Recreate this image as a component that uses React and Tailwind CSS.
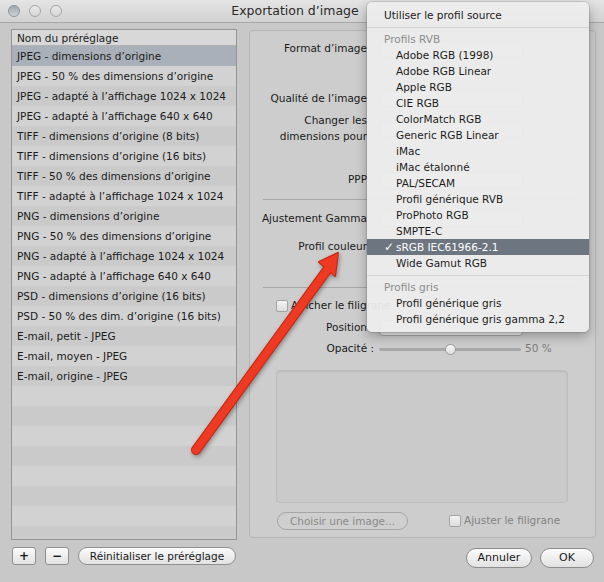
import clsx from "clsx"

const presets = [
    "JPEG - dimensions d’origine",
    "JPEG - 50 % des dimensions d’origine",
    "JPEG - adapté à l’affichage 1024 x 1024",
    "JPEG - adapté à l’affichage 640 x 640",
    "TIFF - dimensions d’origine (8 bits)",
    "TIFF - dimensions d’origine (16 bits)",
    "TIFF - 50 % des dimensions d’origine",
    "TIFF - adapté à l’affichage 1024 x 1024",
    "PNG - dimensions d’origine",
    "PNG - 50 % des dimensions d’origine",
    "PNG - adapté à l’affichage 1024 x 1024",
    "PNG - adapté à l’affichage 640 x 640",
    "PSD - dimensions d’origine (16 bits)",
    "PSD - 50 % des dim. d’origine (16 bits)",
    "E-mail, petit - JPEG",
    "E-mail, moyen - JPEG",
    "E-mail, origine - JPEG",
]

const rgbProfiles = [
    "Adobe RGB (1998)",
    "Adobe RGB Linear",
    "Apple RGB",
    "CIE RGB",
    "ColorMatch RGB",
    "Generic RGB Linear",
    "iMac",
    "iMac étalonné",
    "PAL/SECAM",
    "Profil générique RVB",
    "ProPhoto RGB",
    "SMPTE-C",
    "sRGB IEC61966-2.1",
    "Wide Gamut RGB",
]

const grayProfiles = ["Profil générique gris", "Profil générique gris gamma 2,2"]

function Row({ label, className, children }) {
    return (
        <div className={clsx("flex items-center", className)}>
            <div className="w-[117px] shrink-0 text-right">{label}</div>
            <div className="ml-[12px]">{children}</div>
        </div>
    )
}

function Popup() {
    return <div className="h-[16px] w-[144px] rounded-[4px] border border-[#a5a5a5] bg-[#ececec]" />
}

function Checkbox() {
    return <span className="inline-block h-[12px] w-[12px] rounded-[2px] border border-[#a3a3a3] bg-gradient-to-b from-[#f4f4f4] to-[#dcdcdc]" />
}

function MenuItem({ children, checked }) {
    return (
        <div
            className={clsx(
                "flex h-[16px] items-center leading-[16px]",
                checked ? "bg-[#6d7580] text-white" : "text-[#1c1c1c]"
            )}
        >
            <span className="w-[29px] pl-[17px] text-[12px] leading-none">{checked ? "✓" : ""}</span>
            <span>{children}</span>
        </div>
    )
}

export default function App() {
    const rows = Array.from({ length: 25 }, (_, i) => presets[i] ?? "")

    return (
        <div className="relative h-[582px] w-[604px] overflow-hidden bg-[#c8c8c8] font-['DejaVu_Sans',sans-serif] text-[10.5px] text-[#1a1a1a]">
            {/* Title bar */}
            <div className="flex h-[23px] items-center border-b border-[#a8a8a8] bg-gradient-to-b from-[#e4e4e4] to-[#d2d2d2]">
                <div className="flex w-[70px] gap-[9px] pl-[8px]">
                    <span className="h-[12px] w-[12px] rounded-full border border-[#8c939b] bg-gradient-to-b from-[#9ea6af] to-[#cfd4d9]" />
                    <span className="h-[12px] w-[12px] rounded-full border border-[#a6a6a6] bg-gradient-to-b from-[#e9e9e9] to-[#d6d6d6]" />
                    <span className="h-[12px] w-[12px] rounded-full border border-[#a6a6a6] bg-gradient-to-b from-[#e9e9e9] to-[#d6d6d6]" />
                </div>
                <div className="flex-1 text-center text-[12.5px] text-[#2a2a2a]">Exportation d’image</div>
                <div className="w-[84px]" />
            </div>

            <div className="flex gap-[12px] pl-[11px] pt-[6px]">
                {/* Presets column */}
                <div className="flex flex-col">
                    <div className="h-[511px] w-[226px] overflow-hidden border border-[#959595] bg-[#cbcbcb]">
                        <div className="h-[16px] border-b border-[#b2b2b2] bg-[#d8d8d8] pl-[5px] leading-[16px]">
                            Nom du préréglage
                        </div>
                        {rows.map((name, i) => (
                            <div
                                key={i}
                                className={clsx(
                                    "h-[20px] whitespace-nowrap pl-[5px] leading-[20px]",
                                    i === 0 ? "bg-[#a9b0b9]" : i % 2 ? "bg-[#d2d2d2]" : "bg-[#cacaca]"
                                )}
                            >
                                {name}
                            </div>
                        ))}
                    </div>
                    <div className="mt-[7px] flex items-center gap-[9px] pl-[1px]">
                        <button className="flex h-[18px] w-[24px] items-center justify-center rounded-[3px] border border-[#8f8f8f] bg-gradient-to-b from-[#fbfbfb] to-[#e2e2e2] text-[12px] font-bold leading-none">
                            +
                        </button>
                        <button className="flex h-[18px] w-[24px] items-center justify-center rounded-[3px] border border-[#8f8f8f] bg-gradient-to-b from-[#fbfbfb] to-[#e2e2e2] text-[12px] font-bold leading-none">
                            −
                        </button>
                        <button className="h-[18px] w-[158px] rounded-full border border-[#8f8f8f] bg-gradient-to-b from-[#fbfbfb] to-[#e2e2e2] leading-[16px]">
                            Réinitialiser le préréglage
                        </button>
                    </div>
                </div>

                {/* Settings column */}
                <div className="flex flex-col">
                    <div className="mt-[1px] h-[508px] w-[347px] rounded-[4px] border border-[#b5b5b5] bg-[#cdcdcd]">
                        <Row label="Format d’image" className="mt-[9px] h-[18px]">
                            <Popup />
                        </Row>
                        <Row label="Qualité de l’image" className="mt-[32px] h-[18px]">
                            <Popup />
                        </Row>
                        <Row label={<span className="leading-[15px]">Changer les<br />dimensions pour</span>} className="mt-[6px] h-[30px]">
                            <Popup />
                        </Row>
                        <Row label="PPP" className="mt-[27px] h-[18px]">
                            <Popup />
                        </Row>
                        <div className="mx-[13px] mt-[10px] h-px bg-[#a9a9a9]" />
                        <Row label={<span className="whitespace-nowrap">Ajustement Gamma</span>} className="mt-[10px] h-[18px]">
                            <Popup />
                        </Row>
                        <Row label="Profil couleur" className="mt-[10px] h-[18px]">
                            <Popup />
                        </Row>
                        <div className="mx-[13px] mt-[31px] h-px bg-[#a9a9a9]" />
                        <div className="mt-[9px] flex h-[18px] items-center gap-[3px] pl-[26px]">
                            <Checkbox />
                            <span>Afficher le filigrane</span>
                        </div>
                        <Row label="Position" className="mt-[4px] h-[18px]">
                            <Popup />
                        </Row>
                        <div className="mt-[3px] flex h-[18px] items-center">
                            <div className="w-[124px] shrink-0 text-right">Opacité :</div>
                            <div className="relative ml-[5px] h-[3px] w-[142px] rounded-full bg-[#a8a8a8]">
                                <span className="absolute left-[66px] top-[-4px] h-[11px] w-[11px] rounded-full border border-[#9a9a9a] bg-gradient-to-b from-[#fafafa] to-[#dedede]" />
                            </div>
                            <span className="ml-[4px] text-[#7c7c7c]">50 %</span>
                        </div>
                        <div className="ml-[26px] mt-[12px] h-[133px] w-[292px] rounded-[4px] border border-[#bdbdbd] bg-[#cacaca] shadow-[inset_0_1px_2px_rgba(0,0,0,0.08)]" />
                        <div className="mt-[9px] flex h-[18px] items-center pl-[27px]">
                            <button className="h-[18px] w-[131px] rounded-full border border-[#a6a6a6] bg-[#cfcfcf] leading-[16px] text-[#8a8a8a]">
                                Choisir une image...
                            </button>
                            <div className="ml-[41px] flex items-center gap-[3px] text-[#838383]">
                                <Checkbox />
                                <span>Ajuster le filigrane</span>
                            </div>
                        </div>
                    </div>
                    <div className="mt-[10px] flex justify-end gap-[8px] pr-[2px]">
                        <button className="h-[20px] w-[66px] rounded-full border border-[#8c8c8c] bg-gradient-to-b from-[#fbfbfb] to-[#e2e2e2] text-[11px] leading-[18px]">
                            Annuler
                        </button>
                        <button className="h-[20px] w-[54px] rounded-full border border-[#8c8c8c] bg-gradient-to-b from-[#fbfbfb] to-[#e2e2e2] text-[11px] leading-[18px]">
                            OK
                        </button>
                    </div>
                </div>
            </div>

            {/* Colour profile menu */}
            <div className="absolute left-[367px] top-[2px] w-[222px] rounded-[5px] bg-[#ececec]/95 pb-[5px] pt-[5px] shadow-[0_4px_12px_rgba(0,0,0,0.3)] ring-1 ring-black/10">
                <div className="h-[16px] pl-[17px] leading-[16px]">Utiliser le profil source</div>
                <div className="flex h-[8px] items-center">
                    <div className="h-px w-full bg-[#d3d3d3]" />
                </div>
                <div className="h-[16px] pl-[17px] leading-[16px] text-[#8c8c8c]">Profils RVB</div>
                {rgbProfiles.map((p) => (
                    <MenuItem key={p} checked={p === "sRGB IEC61966-2.1"}>
                        {p}
                    </MenuItem>
                ))}
                <div className="flex h-[8px] items-center">
                    <div className="h-px w-full bg-[#d3d3d3]" />
                </div>
                <div className="h-[16px] pl-[17px] leading-[16px] text-[#8c8c8c]">Profils gris</div>
                {grayProfiles.map((p) => (
                    <MenuItem key={p}>{p}</MenuItem>
                ))}
            </div>

            {/* Red annotation arrow */}
            <svg
                className="pointer-events-none absolute inset-0 drop-shadow-[1px_2px_2px_rgba(0,0,0,0.35)]"
                width="604"
                height="582"
                viewBox="0 0 604 582"
            >
                <line x1="196" y1="450" x2="327" y2="270" stroke="#c42612" strokeWidth="10" strokeLinecap="round" />
                <polygon points="338,253 319,262 335,276" fill="#c42612" stroke="#c42612" strokeWidth="2" strokeLinejoin="round" />
                <line x1="196" y1="450" x2="327" y2="270" stroke="#ee3a22" strokeWidth="8" strokeLinecap="round" />
                <polygon points="338,253 319,262 335,276" fill="#ee3a22" strokeLinejoin="round" />
            </svg>
        </div>
    )
}
